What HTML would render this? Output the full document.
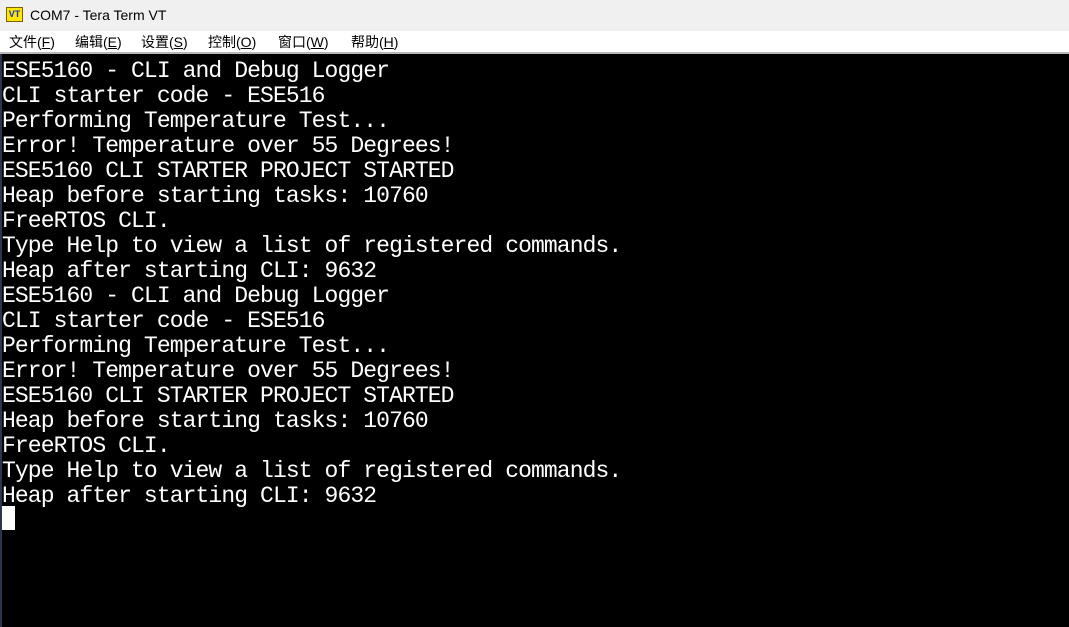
<!DOCTYPE html>
<html><head><meta charset="utf-8"><style>
body{margin:0;width:1069px;height:627px;overflow:hidden;background:#000;font-family:"Liberation Sans","Noto Sans CJK SC",sans-serif;position:relative}
#title{position:absolute;left:0;top:0;width:1069px;height:31px;background:#f0f0f0}
#title .t{position:absolute;left:30px;top:7px;font-size:14px;color:#000}
#icon{position:absolute;left:6px;top:7px;width:15px;height:13px;background:#ffe600;border:1px solid #806000;font:bold 9px "Liberation Sans",sans-serif;color:#1030c0;text-align:center;line-height:13px}
#menu{position:absolute;left:0;top:31px;width:1069px;height:21px;background:#fff;font-size:14px}
#menu span{position:absolute;top:1px;color:#000}
#line{position:absolute;left:0;top:52px;width:1069px;height:2px;background:#b8b8b8}
#term{position:absolute;left:2px;top:59px;color:#fff;font-family:"Liberation Mono",monospace;font-size:23px;letter-spacing:-0.9px;line-height:25px;white-space:pre}
#cur{position:absolute;left:2px;top:506px;width:13px;height:24px;background:#fff}
#lb{position:absolute;left:0;top:54px;width:2px;height:573px;background:#2a3550}
</style></head><body>
<div id="title"><div id="icon">VT</div><div class="t">COM7 - Tera Term VT</div></div>
<div id="menu"><span style="left:9px">文件(<u>F</u>)</span><span style="left:75px">编辑(<u>E</u>)</span><span style="left:141px">设置(<u>S</u>)</span><span style="left:208px">控制(<u>O</u>)</span><span style="left:278px">窗口(<u>W</u>)</span><span style="left:351px">帮助(<u>H</u>)</span></div>
<div id="line"></div>
<div id="lb"></div>
<div id="term">ESE5160 - CLI and Debug Logger
CLI starter code - ESE516
Performing Temperature Test...
Error! Temperature over 55 Degrees!
ESE5160 CLI STARTER PROJECT STARTED
Heap before starting tasks: 10760
FreeRTOS CLI.
Type Help to view a list of registered commands.
Heap after starting CLI: 9632
ESE5160 - CLI and Debug Logger
CLI starter code - ESE516
Performing Temperature Test...
Error! Temperature over 55 Degrees!
ESE5160 CLI STARTER PROJECT STARTED
Heap before starting tasks: 10760
FreeRTOS CLI.
Type Help to view a list of registered commands.
Heap after starting CLI: 9632</div>
<div id="cur"></div>
</body></html>
